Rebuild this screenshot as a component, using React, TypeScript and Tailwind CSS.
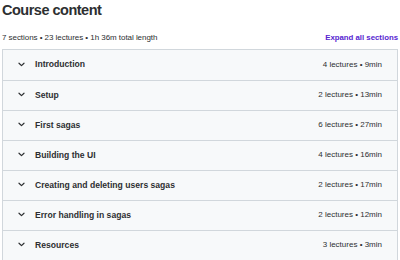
import React from "react";

const sections = [
  { title: "Introduction", meta: "4 lectures • 9min" },
  { title: "Setup", meta: "2 lectures • 13min" },
  { title: "First sagas", meta: "6 lectures • 27min" },
  { title: "Building the UI", meta: "4 lectures • 16min" },
  { title: "Creating and deleting users sagas", meta: "2 lectures • 17min" },
  { title: "Error handling in sagas", meta: "2 lectures • 12min" },
  { title: "Resources", meta: "3 lectures • 3min" },
];

function Chevron() {
  return (
    <svg width="7" height="5" viewBox="0 0 7 5" fill="none" className="shrink-0">
      <path d="M1 1.2L3.5 3.6L6 1.2" stroke="#2d2f31" strokeWidth="1.2" strokeLinecap="round" strokeLinejoin="round" />
    </svg>
  );
}

export default function App() {
  return (
    <div
      className="w-[400px] h-[260px] bg-white px-[2px] text-[#2d2f31] overflow-hidden"
      style={{ fontFamily: '"Liberation Sans", Arial, sans-serif' }}
    >
      <h2 className="text-[14.5px] font-bold leading-[20px] tracking-[-0.5px]">Course content</h2>
      <div className="flex items-center justify-between h-[18px] mt-[9px] mb-[2px]">
        <span className="text-[8px] tracking-[-0.05px]">7 sections • 23 lectures • 1h 36m total length</span>
        <span className="text-[7.8px] font-bold text-[#5624d0]">Expand all sections</span>
      </div>
      <div className="border border-[#d1d7dc] w-[396px]">
        {sections.map((s, i) => (
          <div
            key={s.title}
            className={`flex items-center justify-between h-[30px] bg-[#f7f9fa] pl-[15px] pr-[15px] ${i > 0 ? "border-t border-[#d1d7dc]" : ""}`}
          >
            <div className="flex items-center gap-[10px] -mt-[1px]">
              <Chevron />
              <span className="text-[8.6px] font-bold">{s.title}</span>
            </div>
            <span className="text-[8px] -mt-[1px]">{s.meta}</span>
          </div>
        ))}
      </div>
    </div>
  );
}
